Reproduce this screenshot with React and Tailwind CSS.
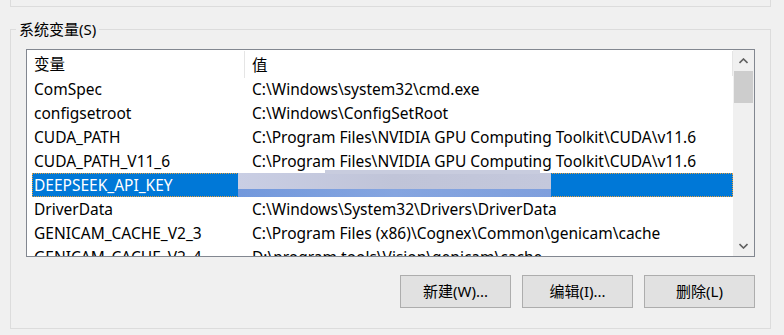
import React from "react";

const rows = [
  ["ComSpec", "C:\\Windows\\system32\\cmd.exe"],
  ["configsetroot", "C:\\Windows\\ConfigSetRoot"],
  ["CUDA_PATH", "C:\\Program Files\\NVIDIA GPU Computing Toolkit\\CUDA\\v11.6"],
  ["CUDA_PATH_V11_6", "C:\\Program Files\\NVIDIA GPU Computing Toolkit\\CUDA\\v11.6"],
  ["DEEPSEEK_API_KEY", "", true],
  ["DriverData", "C:\\Windows\\System32\\Drivers\\DriverData"],
  ["GENICAM_CACHE_V2_3", "C:\\Program Files (x86)\\Cognex\\Common\\genicam\\cache"],
  ["GENICAM_CACHE_V2_4", "D:\\program tools\\Vision\\genicam\\cache"],
];

const font = { fontFamily: '"Noto Sans", "Noto Sans CJK SC", sans-serif' };

function Chevron({ up }) {
  return (
    <svg width="9" height="6" viewBox="0 0 9 6">
      <polyline
        points={up ? "0.5,5 4.5,1 8.5,5" : "0.5,1 4.5,5 8.5,1"}
        fill="none"
        stroke="#606060"
        strokeWidth="1.6"
      />
    </svg>
  );
}

function Row({ name, value, selected }) {
  if (selected) {
    return (
      <div className="relative flex h-[24px] items-center pt-[2px] bg-[#0078d7] text-white outline outline-1 outline-dotted outline-[#e8a03c] -outline-offset-1">
        <div className="w-[212px] pl-[2px] shrink-0">{name}</div>
        <div className="absolute left-[206px] top-0 flex h-[24px] w-[313px] flex-col">
          <div className="h-[16px] bg-gradient-to-r from-[#c9cee4] via-[#c0c4d8] to-[#c4c8dc]" />
          <div className="h-[8px] bg-gradient-to-r from-[#7298dc] via-[#85a5e0] to-[#7f9fdd]" />
        </div>
        <div className="absolute left-[293px] top-[-3px] h-[4px] w-[215px] bg-[#c8ccde]" />
      </div>
    );
  }
  return (
    <div className="flex h-[24px] items-center pt-[2px] text-black">
      <div className="w-[212px] pl-[2px] shrink-0 whitespace-nowrap">{name}</div>
      <div className="pl-[8px] whitespace-nowrap">{value}</div>
    </div>
  );
}

function Button({ children }) {
  return (
    <button className="h-[33px] w-[111px] border border-[#adadad] bg-[#e1e1e1] text-[15px] text-black">
      {children}
    </button>
  );
}

export default function App() {
  return (
    <div className="h-[335px] w-[784px] overflow-hidden bg-[#f0f0f0] text-[15.5px]" style={font}>
      <div className="ml-[10px] h-[7px] w-[761px] border-x border-b border-[#dcdcdc]" />
      <fieldset className="ml-[10px] mt-[12px] w-[761px] border border-[#dcdcdc] pl-[5px] pr-[15px] pb-[20px]">
        <legend className="px-[3px] leading-[20px] text-[15px] text-black">系统变量(S)</legend>
        <div className="ml-[10px] mt-[10px] flex h-[208px] border border-[#828790] bg-white">
          <div className="flex-1 overflow-hidden pl-[5px]">
            <div className="flex h-[27px] items-center">
              <div className="w-[212px] shrink-0 pl-[2px] pt-[3px]">变量</div>
              <div className="h-full border-l border-[#e5e5e5] pl-[7px] pt-[3px] flex items-center flex-1 mt-[1px]">值</div>
              <div className="h-[25px] w-px bg-[#e5e5e5]" />
            </div>
            {rows.map(([n, v, s]) => (
              <Row key={n} name={n} value={v} selected={s} />
            ))}
          </div>
          <div className="flex w-[21px] shrink-0 flex-col bg-[#f0f0f0]">
            <div className="flex h-[21px] items-center justify-center">
              <Chevron up />
            </div>
            <div className="mx-px h-[32px] bg-[#cdcdcd]" />
            <div className="flex-1" />
            <div className="flex h-[20px] items-center justify-center">
              <Chevron />
            </div>
          </div>
        </div>
        <div className="mt-[18px] flex justify-end gap-[11px]">
          <Button>新建(W)...</Button>
          <Button>编辑(I)...</Button>
          <Button>删除(L)</Button>
        </div>
      </fieldset>
    </div>
  );
}
